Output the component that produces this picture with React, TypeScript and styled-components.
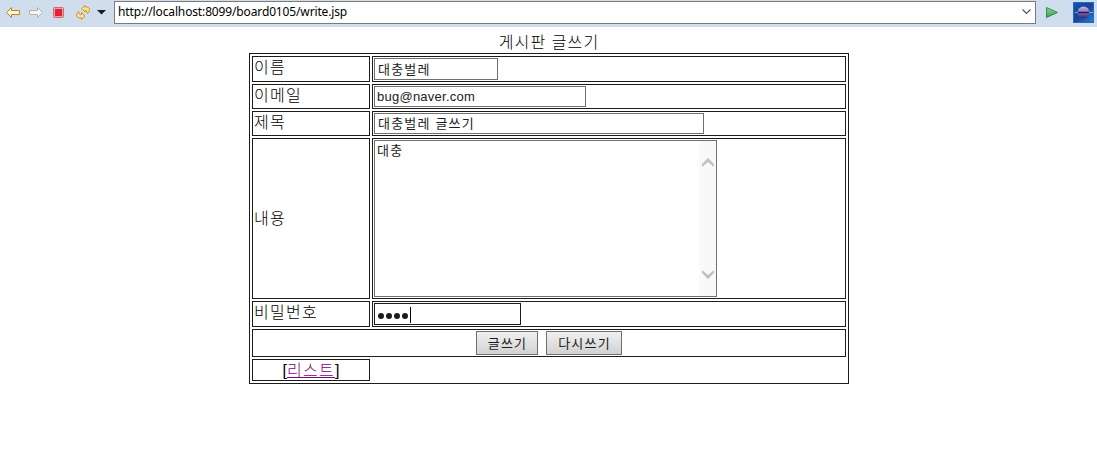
import React from "react";
import styled, { createGlobalStyle } from "styled-components";

const Global = createGlobalStyle`
  * { box-sizing: border-box; }
  body { margin: 0; background: #fff; color: #000; font-family: "Liberation Sans", "Noto Sans CJK KR", sans-serif; }
`;

const Page = styled.div`
  width: 1097px;
  height: 466px;
  overflow: hidden;
`;

const Toolbar = styled.div`
  display: flex;
  align-items: flex-start;
  height: 27px;
  background: #cfdded;
`;

const Tools = styled.div`
  width: 114px;
  height: 25px;
  flex: none;
`;

const Address = styled.div`
  display: flex;
  align-items: center;
  justify-content: space-between;
  width: 922px;
  height: 23px;
  margin-top: 1px;
  padding: 0 4px 1px 3px;
  background: #fff;
  border: 1px solid #7a7a7a;
  font: 12px/18px "Noto Sans", sans-serif;
  letter-spacing: -0.14px;
  white-space: nowrap;
`;

const RightTools = styled.div`
  width: 61px;
  height: 27px;
`;

const Content = styled.main`
  width: 600px;
  margin: 6px 0 0 249px;
`;

const Title = styled.h1`
  margin: 0;
  height: 20px;
  font-size: 16px;
  font-weight: 300;
  line-height: 20px;
  letter-spacing: 1.1px;
  text-align: center;
`;

const Table = styled.form`
  display: grid;
  grid-template-columns: 118px 474px;
  grid-template-rows: 26px 25px 25px 161px 26px 28px 22px;
  gap: 2px;
  width: 600px;
  height: 331px;
  padding: 2px;
  border: 1px solid #1c1c1e;
`;

const Cell = styled.div<{ $center?: boolean }>`
  display: flex;
  justify-content: ${(p) => (p.$center ? "center" : "flex-start")};
  padding: 1px;
  border: 1px solid #1c1c1e;
  font-size: 16px;
  line-height: 20px;
  letter-spacing: 1.25px;
  white-space: nowrap;
`;

const Label = styled(Cell)<{ $middle?: boolean }>`
  align-items: ${(p) => (p.$middle ? "center" : "flex-start")};
  font-weight: 300;
`;

const ButtonCell = styled(Cell)`
  grid-column: 1 / 3;
  gap: 8px;
`;

const Input = styled.div<{ $width: number; $focus?: boolean; $latin?: boolean }>`
  display: flex;
  align-items: center;
  width: ${(p) => p.$width}px;
  height: 100%;
  padding: 1px 3px 0 ${(p) => (p.$latin || p.$focus ? 2 : 3)}px;
  border: 1px solid ${(p) => (p.$focus ? "#1c1c1e" : "#707070")};
  color: #1c1c1c;
  font-size: 13px;
  line-height: 18px;
  letter-spacing: ${(p) => (p.$latin ? 0.25 : 1.2)}px;
`;

const TextArea = styled.div`
  display: flex;
  justify-content: space-between;
  width: 343px;
  height: 157px;
  padding-left: 2px;
  border: 1px solid #707070;
  color: #1c1c1c;
  font-size: 13px;
  line-height: 19px;
`;

const Scroll = styled.div`
  display: flex;
  flex-direction: column;
  justify-content: space-between;
  align-items: center;
  width: 17px;
  padding: 17px 0;
  background: #f9f9f9;
`;

const Dot = styled.i`
  width: 6px;
  height: 6px;
  margin: 2px 1px 0;
  border-radius: 50%;
  background: #1c1c1c;
`;

const Caret = styled.i`
  width: 1px;
  height: 16px;
  margin-left: 1px;
  background: #000;
`;

const Button = styled.button<{ $width: number }>`
  width: ${(p) => p.$width}px;
  height: 24px;
  padding: 2px 0 0 1px;
  border: 1px solid #707070;
  background: linear-gradient(#f0f0f0, #d2d2d2);
  color: #1c1c1c;
  font: 13px/20px "Liberation Sans", "Noto Sans CJK KR", sans-serif;
  letter-spacing: 1.2px;
`;

const ListLink = styled.span`
  letter-spacing: 0;
`;

const Link = styled.a`
  color: #800080;
  font-weight: 300;
  letter-spacing: 1.3px;
  text-decoration: underline;
`;

const Chevron = ({ up }: { up?: boolean }) => (
  <svg width="12" height="9" viewBox="0 0 12 9">
    <path d={up ? "M0 6 6 0l6 6v3L6 4 0 9z" : "M0 0v3l6 6 6-6V0L6 5z"} fill="#c1c1c1" />
  </svg>
);

export default function App() {
  return (
    <Page>
      <Global />
      <Toolbar>
        <Tools>
          <svg width="114" height="25" viewBox="0 0 114 25">
            <path d="M6.5 12.5 11.5 7.5V10.5H19.5V14.5H11.5V17.5Z" fill="#fff6d0" stroke="#b8862b" strokeLinejoin="round" />
            <path d="M42.5 12.5 37.5 7.5V10.5H29.5V14.5H37.5V17.5Z" fill="#f5f5f5" stroke="#b2b2b2" strokeLinejoin="round" />
            <rect x="53.5" y="7.5" width="10" height="10" rx="1" fill="#f0a0a4" stroke="#d16b70" />
            <rect x="55" y="9" width="7" height="7" fill="#dc2436" />
            <path d="M81.5 8.5 85 5.5V7Q89.5 6 89.5 10.5L87.5 13.5 86 10.5H85V12Z" fill="#ffe08a" stroke="#c99539" strokeLinejoin="round" />
            <path d="M85 16 81.5 19.5V18Q76.5 18.5 76.5 14.5L78.5 11.5 80 14.5H81.5V12.5Z" fill="#ffe08a" stroke="#c99539" strokeLinejoin="round" />
            <path d="M97 10h9l-4.5 4.5z" fill="#1c1c1c" />
          </svg>
        </Tools>
        <Address>
          <span>http://localhost:8099/board0105/write.jsp</span>
          <svg width="9" height="6" viewBox="0 0 9 6"><path d="m.5.5 4 4 4-4" fill="none" stroke="#555" strokeWidth="1.2" /></svg>
        </Address>
        <RightTools>
          <svg width="61" height="27" viewBox="0 0 61 27">
            <defs>
              <linearGradient id="blue" x1="0" y1="0" x2="1" y2="1"><stop stopColor="#0a55b4" /><stop offset=".5" stopColor="#1a429c" /><stop offset="1" stopColor="#1f82e0" /></linearGradient>
              <linearGradient id="planet" x1="0" y1="0" x2="0" y2="1"><stop stopColor="#c3b1df" /><stop offset=".45" stopColor="#8c78bb" /><stop offset="1" stopColor="#2e2060" /></linearGradient>
              <linearGradient id="green" x1="0" y1="0" x2="0" y2="1"><stop stopColor="#9bd09a" /><stop offset="1" stopColor="#3aa14b" /></linearGradient>
            </defs>
            <path d="M10.5 7.5 21.5 12.5 10.5 17.5Z" fill="url(#green)" stroke="#2f8f4a" strokeLinejoin="round" />
            <rect x="37.5" y="2.5" width="20" height="20" fill="url(#blue)" stroke="#2a68ba" />
            <circle cx="47.5" cy="12.5" r="6" fill="url(#planet)" />
            <path d="M39 12.5h3M53 12.5h4" stroke="#7fa6e0" />
            <path d="M42 12.5h11" stroke="#231a60" strokeWidth="1.5" />
          </svg>
        </RightTools>
      </Toolbar>
      <Content>
        <Title>게시판 글쓰기</Title>
        <Table>
          <Label>이름</Label>
          <Cell><Input $width={124}>대충벌레</Input></Cell>
          <Label>이메일</Label>
          <Cell><Input $width={212} $latin>bug@naver.com</Input></Cell>
          <Label>제목</Label>
          <Cell><Input $width={330}>대충벌레 글쓰기</Input></Cell>
          <Label $middle>내용</Label>
          <Cell>
            <TextArea>
              <span>대충</span>
              <Scroll><Chevron up /><Chevron /></Scroll>
            </TextArea>
          </Cell>
          <Label>비밀번호</Label>
          <Cell><Input $width={147} $focus><Dot /><Dot /><Dot /><Dot /><Caret /></Input></Cell>
          <ButtonCell $center>
            <Button type="button" $width={62}>글쓰기</Button>
            <Button type="button" $width={76}>다시쓰기</Button>
          </ButtonCell>
          <Cell $center><ListLink>[<Link>리스트</Link>]</ListLink></Cell>
        </Table>
      </Content>
    </Page>
  );
}
